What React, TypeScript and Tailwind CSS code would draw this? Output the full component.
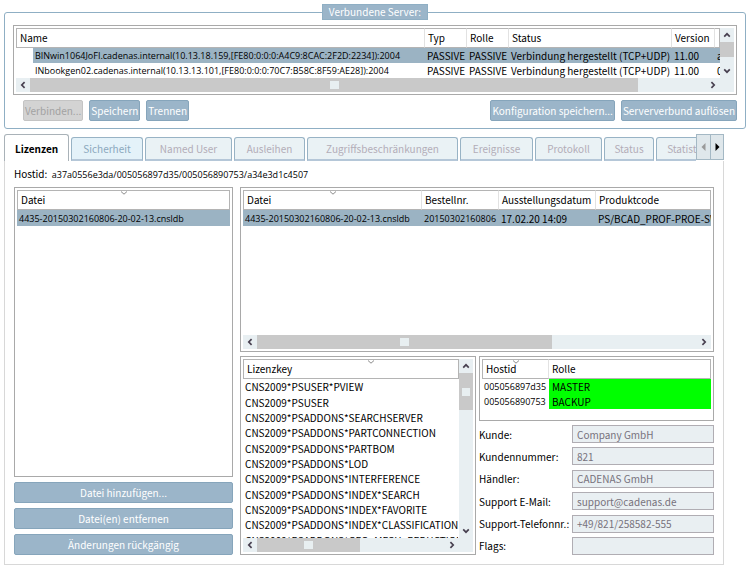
import cn from 'clsx'
import { FC, ReactNode } from 'react'

type Column = { label: string; sorted?: boolean; span?: number }

// long ids and file names are set a little tighter than the labels
const idText = "font-['Open_Sans',sans-serif] text-[9px]"

const SortMark = () => (
	<svg className="absolute top-0 left-1/2 -translate-x-1/2" width="7" height="4" viewBox="0 0 7 4" aria-hidden="true">
		<path d="M0.5 0.5L3.5 3.2L6.5 0.5" fill="none" stroke="#8c8c8c" />
	</svg>
)

const Head: FC<{ columns: Column[] }> = ({ columns }) => (
	<thead>
		<tr>
			{columns.map(column => (
				<th
					key={column.label}
					colSpan={column.span}
					className={cn(
						'relative h-5 border-y border-r border-y-[#b4b4b4] border-r-[#e2e2e2] px-[3px] pb-[2px] text-left font-normal whitespace-nowrap',
						'first:border-l first:border-l-[#b4b4b4] last:border-r-[#b4b4b4]'
					)}
				>
					{column.label}
					{column.sorted && <SortMark />}
				</th>
			))}
		</tr>
	</thead>
)

const Arrow: FC<{ dir: 'up' | 'down' | 'left' | 'right'; label: string }> = ({ dir, label }) => (
	<button type="button" aria-label={label} className="grid size-[14px] shrink-0 place-items-center">
		<svg
			className={cn({ 'rotate-90': dir === 'right', 'rotate-180': dir === 'down', '-rotate-90': dir === 'left' })}
			width="8"
			height="8"
			viewBox="0 0 8 8"
		>
			<path d="M1.2 5.6L4 2.8L6.8 5.6" fill="none" stroke="#484050" strokeWidth="1.7" />
		</svg>
	</button>
)

const HScroll: FC<{ thumb: string; corner?: boolean }> = ({ thumb, corner }) => (
	<div className={cn('flex h-[14px] shrink-0 bg-[#e8eff2]', corner && 'pr-[14px]')}>
		<Arrow dir="left" label="Nach links" />
		<div className="flex-1">
			<div className={cn('grid h-full place-items-center bg-[#c9c9c9]', thumb)}>
				<span className="h-2 w-[9px] bg-[#e8eff1]" />
			</div>
		</div>
		<Arrow dir="right" label="Nach rechts" />
	</div>
)

const VScroll: FC<{ thumb: string; grip?: boolean }> = ({ thumb, grip }) => (
	<div className="flex w-[14px] shrink-0 flex-col bg-[#e8eff2]">
		<Arrow dir="up" label="Nach oben" />
		<div className="flex-1">
			<div className={cn('grid w-full place-items-center bg-[#c9c9c9]', thumb)}>
				{grip && <span className="size-2 bg-[#e8eff1]" />}
			</div>
		</div>
		<Arrow dir="down" label="Nach unten" />
	</div>
)

const Box: FC<{ children: ReactNode; className?: string }> = ({ children, className }) => (
	<div className={cn('flex min-w-0 flex-col border border-[#a9a9a9] bg-white p-[2px]', className)}>{children}</div>
)

const Button: FC<{ children: ReactNode; className?: string; disabled?: boolean }> = ({
	children,
	className,
	disabled
}) => (
	<button
		type="button"
		disabled={disabled}
		className={cn(
			'h-[21px] rounded-[2px] border px-px whitespace-nowrap',
			disabled ? 'border-[#c4c4c4] bg-[#d3d3d3] text-[#a2a2a2]' : 'border-[#86a5bb] bg-[#9bb5c9] text-white',
			className
		)}
	>
		{children}
	</button>
)

const servers = [
	['BINwin1064JoFI.cadenas.internal(10.13.18.159,[FE80:0:0:0:A4C9:8CAC:2F2D:2234]):2004', 'a'],
	['INbookgen02.cadenas.internal(10.13.13.101,[FE80:0:0:0:70C7:B58C:8F59:AE28]):2004', '0']
]

const Servers = () => (
	<fieldset className="min-w-0 rounded-[3px] border border-[#8fafc4] px-2 pb-[7px]">
		<legend className="mx-auto h-4 border border-[#8fafc4] bg-[#9bb5c9] px-[6px] leading-[14px] text-white">
			Verbundene Server:
		</legend>
		<Box className="mt-[5px]">
			<div className="flex h-[50px]">
				<div className="min-w-0 flex-1 overflow-hidden">
					<table className="w-full table-fixed border-separate border-spacing-0">
						<colgroup>
							<col className="w-[17px]" />
							<col />
							<col className="w-[42px]" />
							<col className="w-[42px]" />
							<col className="w-[163px]" />
							<col className="w-[43px]" />
							<col className="w-[5px]" />
						</colgroup>
						<Head
							columns={[
								{ label: 'Name', span: 2 },
								{ label: 'Typ' },
								{ label: 'Rolle' },
								{ label: 'Status' },
								{ label: 'Version' },
								{ label: '' }
							]}
						/>
						<tbody>
							{servers.map(([name, extra], index) => (
								<tr key={name} className="h-[15px] whitespace-nowrap [&>td]:overflow-hidden [&>td]:pl-[2px]">
									<td />
									{[name, 'PASSIVE', 'PASSIVE', 'Verbindung hergestellt (TCP+UDP)', '11.00', extra].map(
										(cell, i) => (
											<td key={i} className={cn(index === 0 && 'bg-[#9bb3c3]', i === 0 && idText)}>
												{cell}
											</td>
										)
									)}
								</tr>
							))}
						</tbody>
					</table>
				</div>
				<VScroll thumb="h-[15px]" />
			</div>
			<HScroll thumb="w-[90%]" corner />
		</Box>
		<div className="mt-[5px] flex gap-[6px] pl-[10px]">
			<Button disabled>Verbinden...</Button>
			<Button>Speichern</Button>
			<Button>Trennen</Button>
			<Button className="ml-auto">Konfiguration speichern...</Button>
			<Button>Serververbund auflösen</Button>
		</div>
	</fieldset>
)

const tabs = [
	{ label: 'Sicherheit', width: 'w-[72px]' },
	{ label: 'Named User', width: 'w-[87px]' },
	{ label: 'Ausleihen', width: 'w-[71px]' },
	{ label: 'Zugriffsbeschränkungen', width: 'w-[151px]' },
	{ label: 'Ereignisse', width: 'w-[73px]' },
	{ label: 'Protokoll', width: 'w-[67px]' },
	{ label: 'Status', width: 'w-[50px]' },
	{ label: 'Statistik', width: 'w-[60px]' }
]

const Tabs = () => (
	<div className="flex h-[27px]">
		<div role="tablist" className="flex min-w-0 flex-1 items-end gap-[2px] overflow-hidden">
			<button
				type="button"
				role="tab"
				aria-selected="true"
				className="h-full w-[65px] shrink-0 rounded-t-[3px] border border-b-0 border-[#a9b2b8] bg-white font-bold"
			>
				Lizenzen
			</button>
			{tabs.map(({ label, width }, index) => (
				<button
					key={label}
					type="button"
					role="tab"
					aria-selected="false"
					className={cn(
						'h-6 shrink-0 rounded-t-[3px] border border-b-2 border-[#98b3c5] border-b-[#b5c7d8]',
						index === 0 ? 'bg-[#e4f2f9] text-[#8ba8bd]' : 'bg-[#eaf2f5] text-[#b3adb8]',
						width
					)}
				>
					{label}
				</button>
			))}
		</div>
		{['#9a9a9a', '#000000'].map((color, index) => (
			<button
				key={color}
				type="button"
				aria-label={index ? 'Nächste Reiter' : 'Vorherige Reiter'}
				className="grid h-[26px] w-[14px] place-items-center border border-[#a4b8c4] bg-[#dfe7eb] first-of-type:border-r-0"
			>
				<svg width="5" height="8" viewBox="0 0 5 8">
					<path d={index ? 'M0.5 0L4.5 4L0.5 8Z' : 'M4.5 0L0.5 4L4.5 8Z'} fill={color} />
				</svg>
			</button>
		))}
	</div>
)

const keys = [
	'PSUSER*PVIEW',
	'PSUSER',
	'PSADDONS*SEARCHSERVER',
	'PSADDONS*PARTCONNECTION',
	'PSADDONS*PARTBOM',
	'PSADDONS*LOD',
	'PSADDONS*INTERFERENCE',
	'PSADDONS*INDEX*SEARCH',
	'PSADDONS*INDEX*FAVORITE',
	'PSADDONS*INDEX*CLASSIFICATION',
	'PSADDONS*GEO_MESH_REDUCTION'
]

const details = [
	{ id: 'kunde', label: 'Kunde:', value: 'Company GmbH' },
	{ id: 'nummer', label: 'Kundennummer:', value: '821' },
	{ id: 'haendler', label: 'Händler:', value: 'CADENAS GmbH' },
	{ id: 'mail', label: 'Support E-Mail:', value: 'support@cadenas.de' },
	{ id: 'telefon', label: 'Support-Telefonnr.:', value: '+49/821/258582-555' },
	{ id: 'flags', label: 'Flags:', value: '' }
]

const file = '4435-20150302160806-20-02-13.cnsldb'

const Files = () => (
	<div className="flex w-[219px] shrink-0 flex-col gap-[5px]">
		<Box className="flex-1">
			<table className="w-full border-separate border-spacing-0">
				<Head columns={[{ label: 'Datei', sorted: true }]} />
				<tbody>
					<tr className="h-4 bg-[#9bb3c3]">
						<td className={cn('pl-[2px] whitespace-nowrap', idText)}>{file}</td>
					</tr>
				</tbody>
			</table>
		</Box>
		<Button>Datei hinzufügen...</Button>
		<Button>Datei(en) entfernen</Button>
		<Button>Änderungen rückgängig</Button>
	</div>
)

const Licenses = () => (
	<Box className="h-[165px]">
		<div className="flex-1 overflow-hidden">
			<table className="w-full table-fixed border-separate border-spacing-0">
				<colgroup>
					<col className="w-[179px]" />
					<col className="w-[77px]" />
					<col className="w-[97px]" />
					<col />
				</colgroup>
				<Head
					columns={[
						{ label: 'Datei', sorted: true },
						{ label: 'Bestellnr.' },
						{ label: 'Ausstellungsdatum' },
						{ label: 'Produktcode' }
					]}
				/>
				<tbody>
					<tr className="h-4 bg-[#9bb3c3] whitespace-nowrap [&>td]:overflow-hidden [&>td]:pl-[2px]">
						<td className={idText}>{file}</td>
						<td className={idText}>20150302160806</td>
						<td>17.02.20 14:09</td>
						<td>PS/BCAD_PROF-PROE-SW</td>
					</tr>
				</tbody>
			</table>
		</div>
		<HScroll thumb="w-[67%]" />
	</Box>
)

const Keys = () => (
	<Box className="h-[199px] w-[236px] shrink-0">
		<div className="flex min-h-0 flex-1">
			<div className="min-w-0 flex-1 overflow-hidden">
				<table className="h-[189px] w-[256px] border-separate border-spacing-0">
					<Head columns={[{ label: 'Lizenzkey', sorted: true }]} />
					<tbody>
						{keys.map(key => (
							<tr key={key}>
								<td className="pl-[2px] whitespace-nowrap">CNS2009*{key}</td>
							</tr>
						))}
					</tbody>
				</table>
			</div>
			<div className="h-5 border-l border-[#b4b4b4]" />
			<VScroll thumb="h-[37px]" grip />
		</div>
		<HScroll thumb="w-[55%]" corner />
	</Box>
)

const Hosts = () => (
	<Box className="h-[65px]">
		<table className="w-full table-fixed border-separate border-spacing-0">
			<colgroup>
				<col className="w-[67px]" />
				<col />
			</colgroup>
			<Head columns={[{ label: 'Hostid', sorted: true }, { label: 'Rolle' }]} />
			<tbody>
				{[
					['005056897d35', 'MASTER'],
					['005056890753', 'BACKUP']
				].map(([id, role]) => (
					<tr key={id} className="h-[15px]">
						<td className={cn('pl-[2px]', idText)}>{id}</td>
						<td className="bg-[#00ff00] pl-[3px]">{role}</td>
					</tr>
				))}
			</tbody>
		</table>
	</Box>
)

const Details = () => (
	<div className="flex flex-1 flex-col justify-between">
		{details.map(({ id, label, value }) => (
			<div key={id} className="flex items-center">
				<label htmlFor={id} className="w-[93px] shrink-0 whitespace-nowrap">
					{label}
				</label>
				<input
					id={id}
					defaultValue={value}
					readOnly
					className="h-[18px] min-w-0 flex-1 border border-[#b0adb3] bg-[#e9eff2] px-1 text-[#77727c]"
				/>
			</div>
		))}
	</div>
)

const App = () => (
	<main className="bg-white px-1 pt-1 font-['Noto_Sans_CJK_JP','Open_Sans',sans-serif] text-[10px] leading-[15px] text-black">
		<Servers />
		<div className="mt-[5px] mr-[22px]">
			<Tabs />
			<section className="border border-t-0 border-[#d8d8d8] px-[9px] pb-[9px]">
				<p className="pt-[5px] pb-[5px]">
					Hostid:&nbsp; <span className={idText}>a37a0556e3da/005056897d35/005056890753/a34e3d1c4507</span>
				</p>
				<div className="flex gap-[7px]">
					<Files />
					<div className="flex min-w-0 flex-1 flex-col gap-1">
						<Licenses />
						<div className="flex gap-[3px]">
							<Keys />
							<div className="flex min-w-0 flex-1 flex-col gap-1">
								<Hosts />
								<Details />
							</div>
						</div>
					</div>
				</div>
			</section>
		</div>
	</main>
)

export default App
